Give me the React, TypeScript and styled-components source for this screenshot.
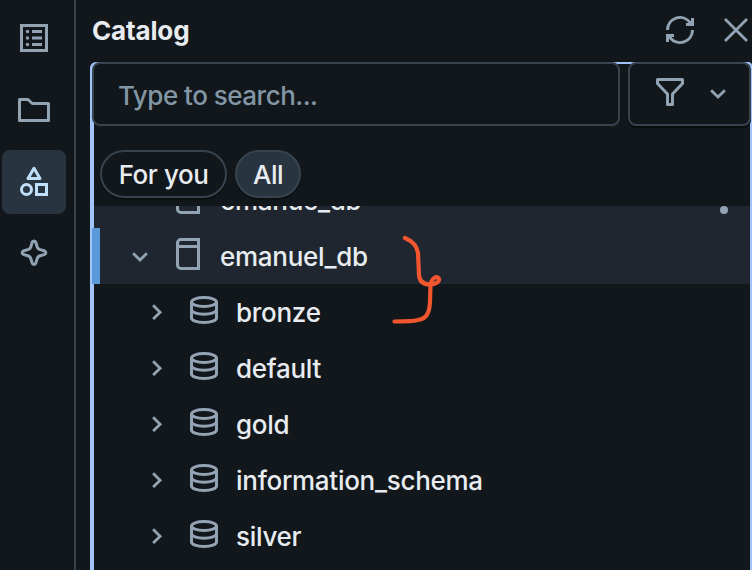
import React from "react";
import styled, { createGlobalStyle } from "styled-components";

const Global = createGlobalStyle`
  * { box-sizing: border-box; }
  body { margin: 0; background: #11171b; overflow: hidden; }
`;

const Window = styled.div`
  position: relative;
  display: flex;
  width: 752px;
  height: 570px;
  overflow: hidden;
  background: #11171b;
  color: #e8ecf0;
  font-family: Inter, "Liberation Sans", sans-serif;
  font-size: 26px;
  font-weight: 450;
`;

const Rail = styled.nav`
  display: flex;
  flex-direction: column;
  gap: 8px;
  width: 76px;
  padding: 6px 0 0 2px;
  border-right: 2px solid #37444f;
`;

const RailButton = styled.button<{ $active?: boolean }>`
  display: flex;
  align-items: center;
  justify-content: center;
  width: 64px;
  height: 64px;
  padding: 0;
  border: 0;
  border-radius: 8px;
  background: ${(p) => (p.$active ? "#283440" : "transparent")};
  color: ${(p) => (p.$active ? "#bfdffb" : "#92a4b3")};
`;

const Panel = styled.section`
  flex: 1;
  display: flex;
  flex-direction: column;
  padding-left: 14px;
`;

const Header = styled.header`
  display: flex;
  align-items: center;
  flex: 0 0 62px;
  padding-left: 2px;
  color: #92a4b3;
`;

const Title = styled.h1`
  flex: 1;
  margin: 0;
  color: #e8ecf0;
  font-size: 26px;
  font-weight: 650;
  letter-spacing: -0.15px;
  line-height: 60px;
`;

const HeaderActions = styled.div`
  display: flex;
  gap: 24px;
  padding-bottom: 2px;
`;

const Frame = styled.div`
  flex: 1;
  display: flex;
  flex-direction: column;
  border: solid #a3c4fb;
  border-width: 2px 2px 0 4px;
  border-radius: 6px 4px 0 0;
`;

const SearchRow = styled.div`
  display: flex;
  gap: 8px;
  height: 64px;
  margin: -2px -1px 0 -2px;
`;

const Search = styled.div`
  width: 528px;
  padding-left: 24px;
  border: 2px solid #37444f;
  border-radius: 8px;
  background: #11171b;
  color: #8396a5;
  line-height: 63px;
  letter-spacing: -0.5px;
`;

const Filter = styled.button`
  display: flex;
  align-items: center;
  flex: 1;
  padding: 0 0 4px 24px;
  gap: 16px;
  border: 2px solid #37444f;
  border-radius: 8px;
  background: #11171b;
  color: #92a4b3;
  box-shadow: 0 2px 0 #090d10;
`;

const Chips = styled.div`
  display: flex;
  gap: 8px;
  height: 80px;
  padding: 24px 0 8px 6px;
`;

const Chip = styled.button<{ $width: number; $selected?: boolean }>`
  width: ${(p) => p.$width}px;
  height: 48px;
  padding: 1px 0 0;
  border: 2px solid #37444f;
  border-radius: 24px;
  background: ${(p) => (p.$selected ? "#283440" : "#11171b")};
  color: #e8ecf0;
  font: inherit;
  letter-spacing: -0.45px;
  line-height: 43px;
  box-shadow: 0 2px 0 #0b1013;
`;

const Tree = styled.div`
  display: flex;
  flex-direction: column;
  justify-content: flex-end;
  height: 358px;
  overflow: hidden;
  margin-left: -2px;
`;

const CatalogRow = styled.div<{ $current?: boolean }>`
  display: flex;
  align-items: center;
  flex: 0 0 56px;
  padding-left: ${(p) => (p.$current ? 32 : 38)}px;
  margin-left: ${(p) => (p.$current ? 0 : 2)}px;
  border-left: ${(p) => (p.$current ? "8px solid #5b98d9" : "0")};
  background: #1f262f;
  color: #92a4b3;
`;

const SchemaRow = styled.div`
  display: flex;
  align-items: center;
  flex: 0 0 56px;
  padding-left: 56px;
  color: #92a4b3;
`;

const Glyph = styled.svg<{ $before?: number; $lift?: number }>`
  flex: none;
  display: block;
  margin-left: ${(p) => p.$before ?? 0}px;
  margin-bottom: ${(p) => p.$lift ?? 0}px;
  fill: none;
  stroke: currentColor;
  stroke-width: 3;
`;

const Name = styled.span`
  flex: 1;
  margin-left: 16px;
  padding-top: 1px;
  color: #e8ecf0;
  letter-spacing: -0.28px;
  line-height: 40px;
  white-space: nowrap;
`;

const Annotation = styled.svg`
  position: absolute;
  left: 384px;
  top: 228px;
  fill: none;
  stroke: #f1562f;
  stroke-width: 4.2;
  stroke-linecap: round;
  stroke-linejoin: round;
`;

type GlyphProps = { children: React.ReactNode; before?: number; lift?: number };

const Icon = ({ children, before, lift }: GlyphProps) => (
  <Glyph width="32" height="32" viewBox="0 0 32 32" $before={before} $lift={lift}>
    {children}
  </Glyph>
);

const ChevronDown = () => (
  <Glyph width="16" height="12" viewBox="0 0 16 12">
    <path d="M1.1 3.200 8 10l6.900-6.800" strokeWidth="2.8" />
  </Glyph>
);

const ChevronRight = () => (
  <Glyph width="16" height="16" viewBox="0 0 16 16">
    <path d="M5.100 1.300 12.100 8.200l-7 6.900" strokeWidth="2.8" />
  </Glyph>
);

const CatalogIcon = () => (
  <Icon before={24} lift={4}>
    <path d="M26.500 8.500H8.500a3 3 0 0 1-3-3.500 3.500 3.500 0 0 1 3.500-3.500h17.500v29H9A3.500 3.500 0 0 1 5.500 27V5" />
  </Icon>
);

const DatabaseIcon = () => (
  <Icon before={24} lift={4}>
    <ellipse cx="16" cy="8" rx="12.5" ry="4.5" />
    <path d="M3.5 8v16c0 2.5 5.3 4.500 12.500 4.500s12.500-2 12.500-4.500V8M3.500 15.500c0 2.700 5.300 4.800 12.500 4.800s12.500-2.100 12.500-4.800" />
  </Icon>
);

const MoreDot = styled.span`
  width: 8px;
  height: 8px;
  margin: 20px 22px 0 0;
  border-radius: 50%;
  background: #92a4b3;
`;

const schemas = ["bronze", "default", "gold", "information_schema", "silver"];

export default function App() {
  return (
    <Window>
      <Global />
      <Rail>
        <RailButton aria-label="Workspace list">
          <Icon>
            <rect x="3.5" y="3.5" width="25" height="25" />
            <path d="M14 9.5h10M14 16h10M14 22.5h10" />
            <g fill="currentColor" stroke="none">
              <circle cx="9.5" cy="9.5" r="1.7" />
              <circle cx="9.5" cy="16" r="1.7" />
              <circle cx="9.5" cy="22.5" r="1.7" />
            </g>
          </Icon>
        </RailButton>
        <RailButton aria-label="Folders">
          <Icon>
            <path d="M1.5 5.5H10l4.3 4h16.2v17h-29Z" strokeLinejoin="round" />
          </Icon>
        </RailButton>
        <RailButton aria-label="Catalog" $active>
          <Icon>
            <path d="M16 2.2 22 12.5H10Z" strokeLinejoin="round" />
            <circle cx="8.5" cy="23.5" r="5" />
            <rect x="18.5" y="18.5" width="10" height="10" />
          </Icon>
        </RailButton>
        <RailButton aria-label="Assistant">
          <Icon>
            <path
              d="M14.3 4Q16 1.800 17.700 4L19.300 9.200Q19.900 10.800 21.500 11.400L26.700 13Q29 14.700 26.700 16.400L21.500 18Q19.900 18.600 19.300 20.200L17.700 25.400Q16 27.600 14.300 25.400L12.700 20.200Q12.100 18.600 10.500 18L5.300 16.400Q3 14.700 5.300 13L10.500 11.400Q12.100 10.800 12.700 9.200Z"
              strokeLinejoin="round"
            />
          </Icon>
        </RailButton>
      </Rail>
      <Panel>
        <Header>
          <Title>Catalog</Title>
          <HeaderActions>
            <Icon>
              <path d="M3.5 16a12.5 12.5 0 0 1 22.5-7.5M28.5 16A12.5 12.5 0 0 1 6 23.5" />
              <path d="M28.5 4v6.5H22M3.5 28v-6.5H10" />
              <path d="M22 11l6-5v5ZM10 21l-6 5v-5Z" fill="currentColor" stroke="none" />
            </Icon>
            <Icon>
              <path d="M5 5l22 22M27 5 5 27" strokeWidth="2.8" />
            </Icon>
          </HeaderActions>
        </Header>
        <Frame>
          <SearchRow>
            <Search>Type to search...</Search>
            <Filter aria-label="Filter">
              <Icon>
                <path d="M3.5 3.5h25v4L18.5 18v10.5h-5V18L3.5 7.5Z" strokeLinejoin="round" />
              </Icon>
              <Glyph width="32" height="16" viewBox="-8 -5 32 16">
                <path d="M1.1 1.2 8 8l6.9-6.8" strokeWidth="2.8" />
              </Glyph>
            </Filter>
          </SearchRow>
          <Chips>
            <Chip $width={127}>For you</Chip>
            <Chip $width={66} $selected>All</Chip>
          </Chips>
          <Tree>
            <CatalogRow>
              <ChevronDown />
              <CatalogIcon />
              <Name>emanue_db</Name>
              <MoreDot />
            </CatalogRow>
            <CatalogRow $current>
              <ChevronDown />
              <CatalogIcon />
              <Name>emanuel_db</Name>
            </CatalogRow>
            {schemas.map((name) => (
              <SchemaRow key={name}>
                <ChevronRight />
                <DatabaseIcon />
                <Name>{name}</Name>
              </SchemaRow>
            ))}
          </Tree>
        </Frame>
      </Panel>
      <Annotation width="64" height="100" viewBox="384 228 64 100">
        <path d="M405 238c7 3 12 7 13 15l1 22c.5 6 4 9.500 11 9.500c6 0 10.500-3 8.500-6.500c-3-2.500-7 1-8 6.500l-.5 17c-.5 11-3 17-12 18.500c-6 1.500-15 1.500-23.500 1.500" />
      </Annotation>
    </Window>
  );
}
